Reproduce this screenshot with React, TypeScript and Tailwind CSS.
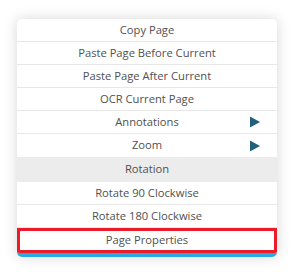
import React from 'react';

const items = [
  { label: 'Copy Page' },
  { label: 'Paste Page Before Current' },
  { label: 'Paste Page After Current' },
  { label: 'OCR Current Page' },
  { label: 'Annotations', sub: true },
  { label: 'Zoom', sub: true },
];

const rotateItems = ['Rotate 90 Clockwise', 'Rotate 180 Clockwise'];

function Arrow() {
  return (
    <svg viewBox="0 0 10 11" className="absolute right-[17px] top-1/2 h-[11px] w-[10px] -translate-y-1/2">
      <path d="M0 0 L10 5.5 L0 11 Z" fill="#23607e" />
    </svg>
  );
}

export default function App() {
  return (
    <div className="h-[278px] w-[303px] bg-white pt-[19px] pl-[17px]" style={{ fontFamily: '"Open Sans", "Noto Sans", sans-serif' }}>
      <div className="w-[260px] overflow-hidden rounded-[5px] border-b-4 border-[#29a9df] bg-white text-[11.2px] text-[#505050] shadow-[0_0_14px_rgba(0,0,0,0.16)]">
        {items.map((item, i) => (
          <div
            key={item.label}
            className={`relative flex h-[23px] items-center justify-center ${i < items.length - 1 ? 'border-b border-[#e8e8e8]' : ''}`}
          >
            {item.label}
            {item.sub && <Arrow />}
          </div>
        ))}
        <div className="flex h-[25px] items-center justify-center bg-[#ececec]">Rotation</div>
        {rotateItems.map((label) => (
          <div key={label} className="flex h-[23px] items-center justify-center border-b border-[#e8e8e8]">
            {label}
          </div>
        ))}
        <div className="flex h-[25px] items-center justify-center border-[3px] border-[#ea1c2a]">Page Properties</div>
      </div>
    </div>
  );
}
